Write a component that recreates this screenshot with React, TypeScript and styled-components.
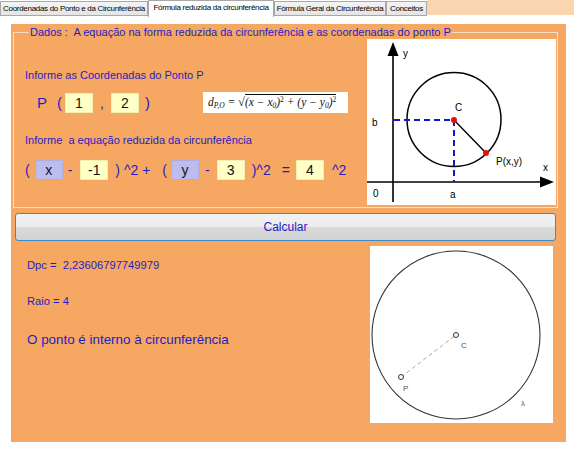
import React from "react";
import styled, { createGlobalStyle } from "styled-components";

const Global = createGlobalStyle`
  html, body { margin: 0; padding: 0; background: #ffffff; }
  body { font-family: "Liberation Sans", Arial, sans-serif; }
`;

const BLUE = "#1e1ec4";
const ORANGE = "#f6a762";

const Page = styled.div`
  width: 574px;
  height: 457px;
  position: relative;
  overflow: hidden;
`;

const TabStrip = styled.div`
  display: flex;
  align-items: flex-end;
  height: 17px;
`;

const Tab = styled.div<{ $w: number; $active?: boolean }>`
  box-sizing: border-box;
  width: ${(p) => p.$w}px;
  height: ${(p) => (p.$active ? 17 : 15)}px;
  align-self: flex-start;
  margin-top: ${(p) => (p.$active ? 0 : 1)}px;
  border: 1px solid #a8a8a8;
  border-bottom: ${(p) => (p.$active ? "none" : "1px solid #a8a8a8")};
  background: ${(p) => (p.$active ? "#ffffff" : "linear-gradient(#f4f4f4, #e4e4e4)")};
  color: #000;
  font-size: 8px;
  letter-spacing: -0.3px;
  line-height: 13px;
  text-align: center;
  white-space: nowrap;
  overflow: hidden;
`;

const TabFiller = styled.div`
  flex: 1;
  align-self: flex-start;
  height: 15px;
  background: #fad6b0;
`;

const Panel = styled.div`
  box-sizing: border-box;
  margin: 7px 0 0 11px;
  width: 555px;
  height: 418px;
  background: ${ORANGE};
  padding: 2px 0 0 2px;
`;

const Group = styled.fieldset`
  box-sizing: border-box;
  width: 545px;
  margin: 0;
  padding: 0 0 2px 11px;
  border: 1px solid rgba(255, 255, 255, 0.6);
`;

const Legend = styled.legend`
  margin-left: 4px;
  padding: 0 1px;
  font-size: 11px;
  line-height: 13px;
  color: ${BLUE};
  white-space: pre;
`;

const GroupBody = styled.div`
  display: flex;
`;

const LeftCol = styled.div`
  width: 342px;
  display: flex;
  flex-direction: column;
`;

const Label = styled.div<{ $mt: number }>`
  margin-top: ${(p) => p.$mt}px;
  font-size: 11px;
  line-height: 14px;
  color: ${BLUE};
  white-space: pre;
`;

const Row = styled.div<{ $mt: number }>`
  margin-top: ${(p) => p.$mt}px;
  display: flex;
  align-items: center;
  height: 21px;
`;

const Sym = styled.span<{ $ml: number; $size?: number }>`
  margin-left: ${(p) => p.$ml}px;
  font-size: ${(p) => p.$size ?? 14}px;
  color: ${BLUE};
  white-space: pre;
  line-height: 20px;
`;

const Box = styled.div<{ $ml: number; $var?: boolean }>`
  box-sizing: border-box;
  margin-left: ${(p) => p.$ml}px;
  width: 28px;
  height: 20px;
  background: ${(p) => (p.$var ? "#bcbcee" : "#ffffc6")};
  border: 1px solid ${(p) => (p.$var ? "#aeaee0" : "#f0f0b0")};
  font-size: 14px;
  line-height: 18px;
  text-align: center;
  color: #141414;
`;

const Formula = styled.div`
  box-sizing: border-box;
  margin-left: 53px;
  width: 145px;
  height: 21px;
  background: #fff;
  padding: 0 0 0 5px;
  font-family: "Liberation Serif", "Times New Roman", serif;
  font-style: italic;
  font-size: 11.5px;
  line-height: 21px;
  color: #111;
  white-space: pre;

  sub { font-size: 7.5px; vertical-align: -2px; line-height: 0; }
  sup { font-size: 7.5px; vertical-align: 4px; line-height: 0; font-style: normal; }
`;

const Root = styled.span`
  font-style: normal;
  font-size: 12.5px;
`;

const Radicand = styled.span`
  display: inline-block;
  border-top: 1px solid #111;
  line-height: 12px;
  padding-top: 1px;
`;

const Canvas = styled.svg`
  display: block;
  background: #ffffff;
  flex: none;
`;

const Calc = styled.button`
  box-sizing: border-box;
  display: block;
  margin: 5px 0 0 2px;
  width: 541px;
  height: 28px;
  border: 1px solid #3a8ad0;
  border-radius: 3px;
  background: linear-gradient(#f2f2f2 0%, #ececec 48%, #dadada 52%, #d2d2d2 100%);
  color: ${BLUE};
  font-family: "Liberation Sans", Arial, sans-serif;
  font-size: 12px;
  padding: 0;
`;

const Bottom = styled.div`
  display: flex;
  margin-top: 5px;
`;

const Results = styled.div`
  flex: 1;
  padding-left: 14px;
  display: flex;
  flex-direction: column;
`;

const Result = styled.div<{ $mt: number; $big?: boolean }>`
  margin-top: ${(p) => p.$mt}px;
  font-size: ${(p) => (p.$big ? 13.4 : 11.2)}px;
  line-height: ${(p) => (p.$big ? 18 : 14)}px;
  color: ${BLUE};
  white-space: pre;
`;

const Picture = styled(Canvas)`
  margin-right: 13px;
`;

const SvgText = styled.text<{ $size?: number }>`
  font-family: "Liberation Sans", Arial, sans-serif;
  font-size: ${(p) => p.$size ?? 10}px;
`;

const tabs = [
  { label: "Coordenadas do Ponto e da Circunferência", w: 148 },
  { label: "Fórmula reduzida da circunferência", w: 126, active: true },
  { label: "Fórmula Geral da Circunferência", w: 112 },
  { label: "Conceitos", w: 41 },
];

const AxisGraph = () => (
  <Canvas width={189} height={166} viewBox="0 0 189 166">
    <line x1={26} y1={14} x2={26} y2={163} stroke="#000" strokeWidth={1.6} />
    <polygon points="26,3 20.5,17 31.5,17" fill="#000" />
    <line x1={0} y1={143} x2={176} y2={143} stroke="#000" strokeWidth={1.6} />
    <polygon points="187,143 173,137.5 173,148.5" fill="#000" />
    <circle cx={87} cy={80.5} r={47} fill="none" stroke="#000" strokeWidth={1.5} />
    <line x1={27} y1={81} x2={87} y2={81} stroke="#1414c8" strokeWidth={2} strokeDasharray="6 4" />
    <line x1={87} y1={81} x2={87} y2={143} stroke="#1414c8" strokeWidth={2} strokeDasharray="6 4" />
    <line x1={87} y1={81} x2={119} y2={114} stroke="#000" strokeWidth={1.4} />
    <circle cx={87} cy={81} r={3} fill="#e41010" />
    <circle cx={119} cy={114} r={3} fill="#e41010" />
    <SvgText x={36} y={18}>y</SvgText>
    <SvgText x={176} y={132}>x</SvgText>
    <SvgText x={6} y={158}>0</SvgText>
    <SvgText x={5} y={87}>b</SvgText>
    <SvgText x={83} y={159}>a</SvgText>
    <SvgText x={88} y={72}>C</SvgText>
    <SvgText x={129} y={126}>P(x,y)</SvgText>
  </Canvas>
);

const CircleGraph = () => (
  <Picture width={183} height={177} viewBox="0 0 183 177">
    <circle cx={86} cy={89} r={84} fill="none" stroke="#333" strokeWidth={1.1} />
    <line x1={31} y1={131} x2={86} y2={89} stroke="#aaa" strokeWidth={1} strokeDasharray="4 3" />
    <circle cx={86} cy={89} r={2.5} fill="#fff" stroke="#333" strokeWidth={1} />
    <circle cx={31} cy={131} r={2.5} fill="#fff" stroke="#333" strokeWidth={1} />
    <SvgText x={91} y={102} $size={8} fill="#555">C</SvgText>
    <SvgText x={33} y={145} $size={8} fill="#555">P</SvgText>
    <SvgText x={151} y={160} $size={8} fill="#555">λ</SvgText>
  </Picture>
);

export default function App() {
  return (
    <Page>
      <Global />
      <TabStrip>
        {tabs.map((t) => (
          <Tab key={t.label} $w={t.w} $active={t.active}>
            {t.label}
          </Tab>
        ))}
        <TabFiller />
      </TabStrip>
      <Panel>
        <Group>
          <Legend>{"Dados :  A equação na forma reduzida da circunferência e as coordenadas do ponto P"}</Legend>
          <GroupBody>
            <LeftCol>
              <Label $mt={29}>Informe as Coordenadas do Ponto P</Label>
              <Row $mt={10}>
                <Sym $ml={12} $size={15}>P</Sym>
                <Sym $ml={10} $size={15}>(</Sym>
                <Box $ml={3}>1</Box>
                <Sym $ml={7}>,</Sym>
                <Box $ml={7}>2</Box>
                <Sym $ml={6} $size={15}>)</Sym>
                <Formula>
                  d<sub>P,O</sub> = <Root>√</Root>
                  <Radicand>
                    (x − x<sub>0</sub>)<sup>2</sup> + (y − y<sub>0</sub>)<sup>2</sup>
                  </Radicand>
                </Formula>
              </Row>
              <Label $mt={20}>{"Informe  a equação reduzida da circunferência"}</Label>
              <Row $mt={12}>
                <Sym $ml={0}>(</Sym>
                <Box $ml={5} $var>x</Box>
                <Sym $ml={5}>-</Sym>
                <Box $ml={8}>-1</Box>
                <Sym $ml={7}>{") ^2 +"}</Sym>
                <Sym $ml={12}>(</Sym>
                <Box $ml={4} $var>y</Box>
                <Sym $ml={6}>-</Sym>
                <Box $ml={7}>3</Box>
                <Sym $ml={7}>)^2</Sym>
                <Sym $ml={11}>=</Sym>
                <Box $ml={6}>4</Box>
                <Sym $ml={8}>^2</Sym>
              </Row>
            </LeftCol>
            <AxisGraph />
          </GroupBody>
        </Group>
        <Calc>Calcular</Calc>
        <Bottom>
          <Results>
            <Result $mt={12}>{"Dpc =  2,23606797749979"}</Result>
            <Result $mt={22}>Raio = 4</Result>
            <Result $mt={23} $big>O ponto é interno à circunferência</Result>
          </Results>
          <CircleGraph />
        </Bottom>
      </Panel>
    </Page>
  );
}
